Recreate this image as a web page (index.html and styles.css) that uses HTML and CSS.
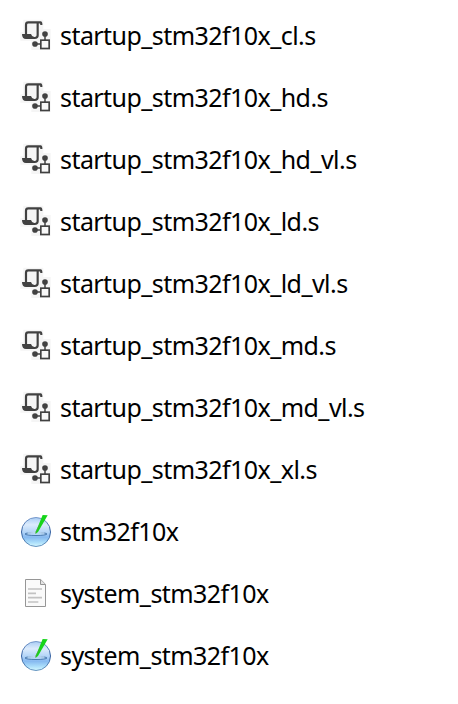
FILE: index.html
```html
<!DOCTYPE html>
<html lang="en">
<head>
<meta charset="utf-8">
<title>Files</title>
<link rel="stylesheet" href="styles.css">
</head>
<body>
<svg class="defs" width="0" height="0" aria-hidden="true">
  <defs>
    <linearGradient id="ball" x1="0" y1="0" x2="0" y2="1">
      <stop offset="0" stop-color="#a9cdf4"/>
      <stop offset=".25" stop-color="#dcebfc"/>
      <stop offset=".5" stop-color="#b4d5f8"/>
      <stop offset=".68" stop-color="#86b9f0"/>
      <stop offset=".85" stop-color="#a9dcfa"/>
      <stop offset="1" stop-color="#d4f8ff"/>
    </linearGradient>
    <linearGradient id="rim" x1="0" y1="0" x2="0" y2="1">
      <stop offset="0" stop-color="#7799cc"/>
      <stop offset=".5" stop-color="#315d9e"/>
      <stop offset="1" stop-color="#6795c0"/>
    </linearGradient>
    <symbol id="asm" viewBox="0 0 120 120">
      <path d="M22 17H82V45H104V108H46V80H13V55H22Z" fill="#f5f5f5"/>
      <path d="M30 60V32Q30 25 37 25H74Q76 25 76 33M65 26V64Q65 72 56 72H30" fill="none" stroke="#414141" stroke-width="6.500"/>
      <path d="M18 60H45Q47 68 55 69V75H30Q18 75 18 60Z" fill="#414141"/>
      <path d="M56 90H78M87 62V78" stroke="#414141" stroke-width="4.500"/>
      <circle cx="87" cy="60" r="8.500" fill="#414141"/>
      <circle cx="57" cy="90" r="8.500" fill="#414141"/>
      <rect x="74.500" y="78.500" width="25" height="25" fill="#f8f8f8" stroke="#414141" stroke-width="5"/>
    </symbol>
    <symbol id="project" viewBox="0 0 120 120">
      <circle cx="60" cy="66" r="43.5" fill="url(#ball)" stroke="url(#rim)" stroke-width="3"/>
      <ellipse cx="60" cy="72" rx="33" ry="4.500" fill="#b8dafa" stroke="#36679f" stroke-width="2.500"/>
      <path d="M35 69Q60 65 85 69" fill="none" stroke="#d8edff" stroke-width="2.500"/>
      <path d="M80 15L95 16L66 66L59 71L60 64Z" fill="#16d51a"/>
      <path d="M72 43L60 64L59 71" fill="none" stroke="#5b9c3d" stroke-width="2"/>
    </symbol>
    <symbol id="document" viewBox="0 0 120 120">
      <path d="M28.500 16.500H74L88.500 31V97.500H28.500Z" fill="#fafafa" stroke="#969696" stroke-width="3"/>
      <path d="M73.500 17V31.500H88" fill="#e4e4e4" stroke="#969696" stroke-width="3"/>
      <path d="M36 45H78M36 58H60M36 71H78M36 84H67" stroke="#c2c2c2" stroke-width="5"/>
    </symbol>
  </defs>
</svg>
<ul class="files">
  <li><svg class="icon asm"><use href="#asm"/></svg><span>startup_stm32f10x_cl.s</span></li>
  <li><svg class="icon asm"><use href="#asm"/></svg><span>startup_stm32f10x_hd.s</span></li>
  <li><svg class="icon asm"><use href="#asm"/></svg><span>startup_stm32f10x_hd_vl.s</span></li>
  <li><svg class="icon asm"><use href="#asm"/></svg><span>startup_stm32f10x_ld.s</span></li>
  <li><svg class="icon asm"><use href="#asm"/></svg><span>startup_stm32f10x_ld_vl.s</span></li>
  <li><svg class="icon asm"><use href="#asm"/></svg><span>startup_stm32f10x_md.s</span></li>
  <li><svg class="icon asm"><use href="#asm"/></svg><span>startup_stm32f10x_md_vl.s</span></li>
  <li><svg class="icon asm"><use href="#asm"/></svg><span>startup_stm32f10x_xl.s</span></li>
  <li><svg class="icon project"><use href="#project"/></svg><span>stm32f10x</span></li>
  <li><svg class="icon document"><use href="#document"/></svg><span>system_stm32f10x</span></li>
  <li><svg class="icon project"><use href="#project"/></svg><span>system_stm32f10x</span></li>
</ul>
</body>
</html>
```
FILE: styles.css
```css
body {
  margin: 0;
  background: #fff;
  color: #000;
}

.defs {
  display: block;
}

.files {
  margin: 0;
  padding: 4px 0 0 16px;
  list-style: none;
  font: 25px/62px "Noto Sans", sans-serif;
  letter-spacing: -0.56px;
}

.files li {
  display: flex;
  align-items: center;
  gap: 4px;
  height: 62px;
}

.icon {
  flex: none;
  width: 40px;
  height: 40px;
}

.asm,
.project {
  margin-top: -2px;
}

.document {
  margin-top: 2px;
}
```
